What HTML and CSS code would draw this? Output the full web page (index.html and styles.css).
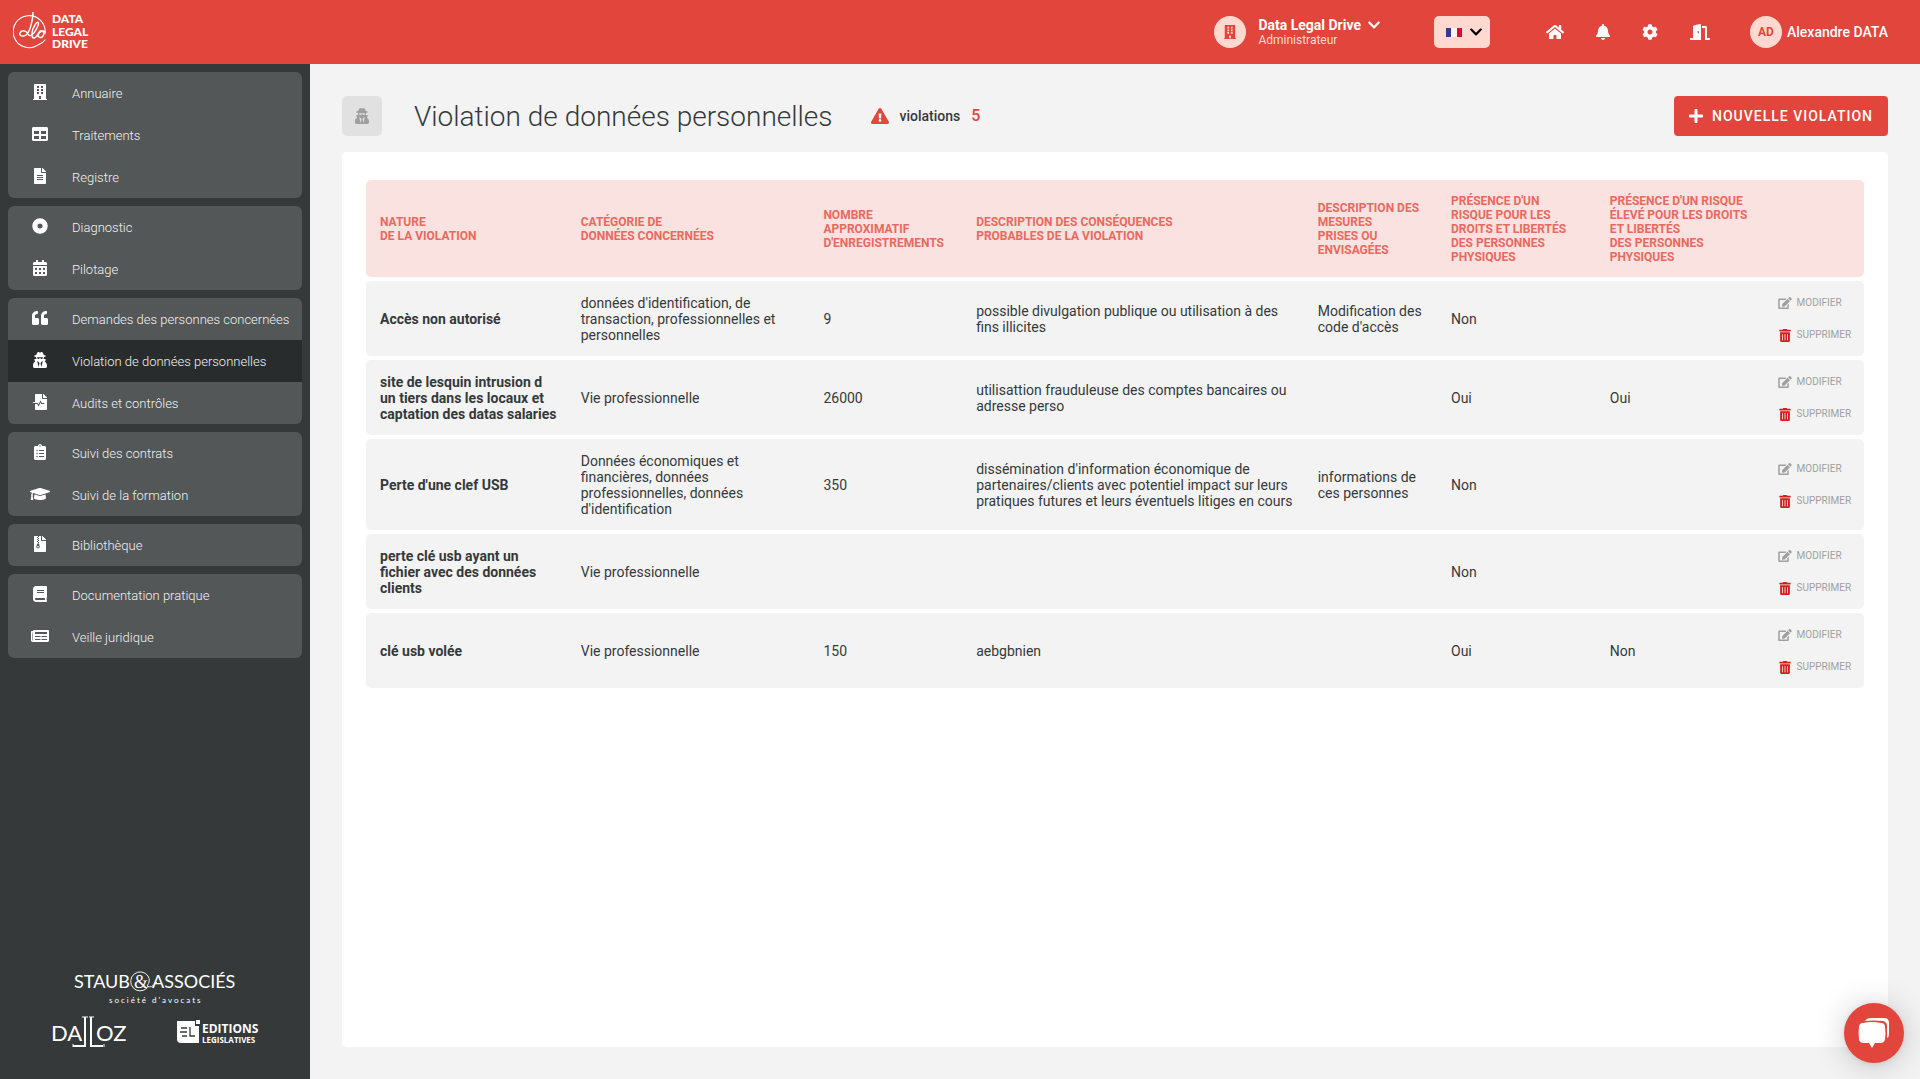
FILE: index.html
```html
<!DOCTYPE html>
<html lang="fr">
<head>
<meta charset="utf-8">
<title>Violation de données personnelles - Data Legal Drive</title>
<link rel="stylesheet" href="styles.css">
</head>
<body>
<svg class="sprite" aria-hidden="true">
  <symbol id="building" viewBox="0 0 448 512"><path fill-rule="evenodd" d="M436 480h-20V24c0-13.3-10.700-24-24-24H56C42.700 0 32 10.700 32 24v456H12c-6.600 0-12 5.400-12 12v20h448v-20c0-6.600-5.400-12-12-12zM128 64h64v64h-64zM256 64h64v64h-64zM128 160h64v64h-64zM256 160h64v64h-64zM128 256h64v64h-64zM256 256h64v64h-64zM192 384h64v96h-64z"/></symbol>
  <symbol id="table" viewBox="0 0 512 512"><path d="M464 32H48C21.490 32 0 53.490 0 80v352c0 26.510 21.490 48 48 48h416c26.510 0 48-21.490 48-48V80c0-26.510-21.490-48-48-48zM224 416H64v-96h160v96zm0-160H64v-96h160v96zm224 160H288v-96h160v96zm0-160H288v-96h160v96z"/></symbol>
  <symbol id="file" viewBox="0 0 384 512"><path d="M224 136V0H24C10.700 0 0 10.700 0 24v464c0 13.300 10.700 24 24 24h336c13.300 0 24-10.700 24-24V160H248c-13.200 0-24-10.800-24-24zm64 236c0 6.600-5.400 12-12 12H108c-6.600 0-12-5.400-12-12v-8c0-6.600 5.400-12 12-12h168c6.600 0 12 5.400 12 12v8zm0-64c0 6.600-5.400 12-12 12H108c-6.600 0-12-5.400-12-12v-8c0-6.600 5.400-12 12-12h168c6.600 0 12 5.400 12 12v8zm0-72v8c0 6.600-5.400 12-12 12H108c-6.600 0-12-5.400-12-12v-8c0-6.600 5.400-12 12-12h168c6.600 0 12 5.400 12 12zm96-114.100v6.100H256V0h6.100c6.400 0 12.500 2.500 17 7l97.900 98c4.500 4.500 7 10.600 7 16.900z"/></symbol>
  <symbol id="disc" viewBox="0 0 512 512"><path fill-rule="evenodd" d="M256 8a248 248 0 1 0 0 496a248 248 0 1 0 0-496zM256 176a80 80 0 1 1 0 160a80 80 0 1 1 0-160z"/></symbol>
  <symbol id="calendar" viewBox="0 0 448 512"><path fill-rule="evenodd" d="M0 464c0 26.500 21.500 48 48 48h352c26.500 0 48-21.500 48-48V192H0zM64 256h64v64H64zM192 256h64v64h-64zM320 256h64v64h-64zM64 384h64v64H64zM192 384h64v64h-64zM320 384h64v64h-64zM400 64h-48V16c0-8.800-7.200-16-16-16h-32c-8.800 0-16 7.200-16 16v48H160V16c0-8.800-7.200-16-16-16h-32c-8.800 0-16 7.200-16 16v48H48C21.500 64 0 85.500 0 112v48h448v-48c0-26.500-21.500-48-48-48z"/></symbol>
  <symbol id="quote" viewBox="0 0 512 512"><path d="M464 256h-80v-64c0-35.300 28.700-64 64-64h8c13.300 0 24-10.700 24-24V56c0-13.300-10.700-24-24-24h-8c-88.400 0-160 71.600-160 160v240c0 26.500 21.500 48 48 48h128c26.500 0 48-21.500 48-48V304c0-26.500-21.500-48-48-48zm-288 0H96v-64c0-35.300 28.700-64 64-64h8c13.300 0 24-10.700 24-24V56c0-13.300-10.700-24-24-24h-8C71.600 32 0 103.600 0 192v240c0 26.500 21.500 48 48 48h128c26.500 0 48-21.500 48-48V304c0-26.500-21.500-48-48-48z"/></symbol>
  <symbol id="spy" viewBox="0 0 448 512"><path d="M383.900 308.300l23.900-62.600c4-10.500-3.700-21.700-15-21.700h-58.500c11-18.900 17.800-40.600 17.800-64v-.3c39.200-7.800 64-19.100 64-31.700 0-13.300-27.300-25.100-70.100-33-9.200-32.800-27-65.800-40.600-82.800-9.500-11.900-25.900-15.600-39.500-8.800l-27.600 13.800c-9 4.500-19.600 4.500-28.600 0L182.100 3.400c-13.600-6.800-30-3.100-39.500 8.800-13.500 17-31.400 50-40.600 82.800-42.700 7.900-70 19.700-70 33 0 12.600 24.800 23.900 64 31.700v.3c0 23.400 6.800 45.100 17.800 64H56.300c-11.500 0-19.200 11.700-14.700 22.300l25.800 60.200C27.300 329.800 0 372.700 0 422.400v44.800C0 491.900 20.100 512 44.800 512h358.400c24.700 0 44.800-20.100 44.800-44.800v-44.800c0-48.400-25.800-90.400-64.100-114.100zM176 480l-41.600-192 49.600 32 24 40-32 120zm96 0l-32-120 24-40 49.600-32L272 480zm41.700-298.500c-3.900 11.900-7 24.600-16.500 33.400-10.100 9.300-48 22.400-64-25-2.800-8.400-15.400-8.400-18.300 0-17 50.200-56 32.400-64 25-9.500-8.800-12.700-21.500-16.500-33.400-.8-2.500-6.300-5.700-6.300-5.800v-10.800c28.300 3.600 61 5.800 96 5.800s67.700-2.100 96-5.800v10.800c-.1.1-5.600 3.200-6.400 5.800z"/></symbol>
  <symbol id="audit" viewBox="0 0 448 512"><path d="M288 136V0H88C74.700 0 64 10.700 64 24v232H8c-4.400 0-8 3.600-8 8v16c0 4.400 3.600 8 8 8h140.900c3 0 5.800 1.700 7.200 4.400l19.900 39.800 56.800-113.700c2.900-5.900 11.400-5.900 14.300 0l34.700 69.500H352c8.800 0 16 7.200 16 16s-7.200 16-16 16h-89.900L240 275.800l-56.800 113.700c-2.900 5.900-11.400 5.900-14.300 0L134.100 320H64v168c0 13.300 10.700 24 24 24h336c13.300 0 24-10.700 24-24V160H312c-13.200 0-24-10.800-24-24zm153-31L343.100 7c-4.500-4.500-10.600-7-17-7H320v128h128v-6.100c0-6.300-2.500-12.400-7-16.900z"/></symbol>
  <symbol id="clipboard" viewBox="0 0 384 512"><path fill-rule="evenodd" d="M336 64h-80c0-35.300-28.700-64-64-64s-64 28.700-64 64H48C21.500 64 0 85.500 0 112v352c0 26.500 21.500 48 48 48h288c26.500 0 48-21.500 48-48V112c0-26.500-21.500-48-48-48zM96 424c-13.300 0-24-10.700-24-24s10.700-24 24-24 24 10.700 24 24-10.700 24-24 24zm0-96c-13.300 0-24-10.700-24-24s10.700-24 24-24 24 10.700 24 24-10.700 24-24 24zm0-96c-13.300 0-24-10.700-24-24s10.700-24 24-24 24 10.700 24 24-10.700 24-24 24zm96-192c13.300 0 24 10.700 24 24s-10.700 24-24 24-24-10.700-24-24 10.700-24 24-24zM160 192h160v32H160zM160 288h160v32H160zM160 384h160v32H160z"/></symbol>
  <symbol id="cap" viewBox="0 0 640 512"><path d="M622.340 153.200L343.400 67.500c-15.200-4.670-31.600-4.670-46.790 0L17.660 153.200c-23.540 7.230-23.540 38.360 0 45.590l48.630 14.940c-10.670 13.190-17.230 29.280-17.880 46.900C38.780 266.150 32 276.110 32 288c0 10.780 5.680 19.850 13.860 25.650L20.330 428.530C18.110 438.520 25.710 448 35.940 448h56.110c10.240 0 17.840-9.480 15.620-19.470L82.140 313.650C90.320 307.850 96 298.780 96 288c0-11.570-6.470-21.250-15.660-26.870.76-15.020 8.440-28.300 20.690-36.720L296.600 284.500c9.060 2.780 26.440 6.250 46.790 0l278.950-85.700c23.550-7.240 23.550-38.360 0-45.600zM352.790 315.090c-28.530 8.760-52.840 3.920-65.590 0l-145.020-44.550L128 384c0 35.350 85.960 64 192 64s192-28.650 192-64l-14.180-113.470-145.030 44.560z"/></symbol>
  <symbol id="archive" viewBox="0 0 384 512"><path fill-rule="evenodd" d="M224 136V0H160v32h-32V0H24C10.700 0 0 10.700 0 24v464c0 13.300 10.700 24 24 24h336c13.300 0 24-10.700 24-24V160H248c-13.200 0-24-10.800-24-24zM96 32h32v32H96zM128 64h32v32h-32zM96 96h32v32H96zM128 128h32v32h-32zM96 160h32v32H96zM128 192h32v32h-32zM106 240h54l22 98c6 36-20 62-54 62s-60-28-54-64zM128 322c-18 0-32 10-32 24s14 24 32 24 32-10 32-24-14-24-32-24zM384 121.900v6.100H256V0h6.100c6.400 0 12.500 2.500 17 7l97.900 98c4.500 4.500 7 10.600 7 16.900z"/></symbol>
  <symbol id="book" viewBox="0 0 448 512"><path d="M448 360V24c0-13.300-10.700-24-24-24H96C43 0 0 43 0 96v320c0 53 43 96 96 96h328c13.300 0 24-10.700 24-24v-16c0-7.500-3.500-14.300-8.900-18.700-4.200-15.400-4.200-59.300 0-74.700 5.400-4.300 8.900-11.100 8.900-18.600zM128 134c0-3.300 2.700-6 6-6h212c3.300 0 6 2.700 6 6v20c0 3.300-2.700 6-6 6H134c-3.300 0-6-2.700-6-6v-20zm0 64c0-3.300 2.700-6 6-6h212c3.300 0 6 2.700 6 6v20c0 3.300-2.700 6-6 6H134c-3.300 0-6-2.700-6-6v-20zm253.400 250H96c-17.700 0-32-14.300-32-32 0-17.600 14.400-32 32-32h285.400c-1.900 17.100-1.900 46.900 0 64z"/></symbol>
  <symbol id="news" viewBox="0 0 576 512"><path fill-rule="evenodd" d="M552 64H88c-13.300 0-24 10.700-24 24v8H24c-13.300 0-24 10.700-24 24v272c0 30.900 25.100 56 56 56h472c26.500 0 48-21.500 48-48V88c0-13.300-10.700-24-24-24zM56 400a8 8 0 0 1-8-8V144h16v248a8 8 0 0 1-8 8zM128 352h176v32H128zM336 352h176v32H336zM128 256h176v32H128zM336 256h176v32H336zM128 128h384v64H128z"/></symbol>
  <symbol id="chevron" viewBox="0 0 448 512"><path d="M207 381.500L12.700 187.100c-9.400-9.400-9.400-24.600 0-33.900l22.700-22.700c9.400-9.400 24.500-9.400 33.900 0L224 284.500l154.700-154c9.400-9.300 24.500-9.300 33.900 0l22.700 22.700c9.400 9.400 9.400 24.600 0 33.900L241 381.500c-9.400 9.400-24.600 9.400-34 0z"/></symbol>
  <symbol id="home" viewBox="0 0 576 512"><path d="M280.370 148.260L96 300.110V464a16 16 0 0 0 16 16l112.060-.29a16 16 0 0 0 15.920-16V368a16 16 0 0 1 16-16h64a16 16 0 0 1 16 16v95.640a16 16 0 0 0 16 16.050L464 480a16 16 0 0 0 16-16V300L295.670 148.260a12.190 12.190 0 0 0-15.300 0zM571.600 251.470L488 182.560V44.050a12 12 0 0 0-12-12h-56a12 12 0 0 0-12 12v72.610L318.470 43a48 48 0 0 0-61 0L4.340 251.470a12 12 0 0 0-1.600 16.900l25.500 31A12 12 0 0 0 45.150 301l235.220-193.740a12.190 12.190 0 0 1 15.300 0L530.900 301a12 12 0 0 0 16.900-1.600l25.500-31a12 12 0 0 0-1.700-16.930z"/></symbol>
  <symbol id="bell" viewBox="0 0 448 512"><path d="M224 512c35.320 0 63.970-28.650 63.970-64H160.030c0 35.350 28.650 64 63.970 64zm215.390-149.710c-19.320-20.760-55.470-51.990-55.470-154.290 0-77.700-54.480-139.900-127.940-155.160V32c0-17.670-14.320-32-31.980-32s-31.980 14.330-31.980 32v20.840C118.560 68.100 64.080 130.300 64.080 208c0 102.300-36.150 133.530-55.470 154.290-6 6.450-8.660 14.160-8.610 21.710.11 16.400 12.980 32 32.100 32h383.800c19.120 0 32-15.600 32.100-32 .05-7.550-2.610-15.270-8.610-21.710z"/></symbol>
  <symbol id="cog" viewBox="0 0 512 512"><path d="M487.400 315.700l-42.600-24.600c4.300-23.200 4.300-47 0-70.200l42.600-24.600c4.900-2.800 7.100-8.600 5.500-14-11.100-35.600-30-67.800-54.700-94.600-3.800-4.100-10-5.100-14.800-2.300L380.800 110c-17.900-15.400-38.500-27.300-60.800-35.100V25.800c0-5.600-3.900-10.500-9.400-11.700-36.700-8.200-74.300-7.800-109.200 0-5.500 1.200-9.400 6.100-9.400 11.700V75c-22.200 7.900-42.800 19.800-60.800 35.100L88.700 85.500c-4.900-2.800-11-1.900-14.800 2.300-24.700 26.700-43.600 58.900-54.700 94.600-1.700 5.400.6 11.200 5.500 14L67.300 221c-4.300 23.200-4.300 47 0 70.200l-42.600 24.600c-4.900 2.800-7.100 8.600-5.500 14 11.100 35.600 30 67.800 54.700 94.600 3.800 4.100 10 5.100 14.800 2.300l42.600-24.600c17.900 15.400 38.500 27.300 60.800 35.100v49.200c0 5.600 3.900 10.500 9.400 11.700 36.700 8.200 74.300 7.800 109.200 0 5.500-1.200 9.400-6.100 9.400-11.700v-49.200c22.200-7.900 42.800-19.800 60.800-35.100l42.600 24.600c4.900 2.800 11 1.900 14.800-2.300 24.700-26.700 43.600-58.900 54.700-94.600 1.500-5.500-.7-11.300-5.600-14.100zM256 336c-44.100 0-80-35.900-80-80s35.900-80 80-80 80 35.900 80 80-35.900 80-80 80z"/></symbol>
  <symbol id="door" viewBox="0 0 640 512"><path d="M624 448h-80V113.450C544 86.190 522.470 64 496 64H384v64h96v384h144c8.840 0 16-7.160 16-16v-32c0-8.840-7.160-16-16-16zM312.240 1.010l-192 49.740C105.990 54.440 96 67.700 96 82.920V448H16c-8.840 0-16 7.160-16 16v32c0 8.840 7.160 16 16 16h336V33.180c0-21.580-19.560-37.410-39.760-32.170zM264 288c-13.250 0-24-14.330-24-32s10.750-32 24-32 24 14.330 24 32-10.750 32-24 32z"/></symbol>
  <symbol id="plus" viewBox="0 0 448 512"><path d="M416 208H272V64c0-17.670-14.330-32-32-32h-32c-17.670 0-32 14.330-32 32v144H32c-17.670 0-32 14.330-32 32v32c0 17.670 14.330 32 32 32h144v144c0 17.670 14.330 32 32 32h32c17.670 0 32-14.330 32-32V304h144c17.670 0 32-14.330 32-32v-32c0-17.670-14.330-32-32-32z"/></symbol>
  <symbol id="warning" viewBox="0 0 576 512"><path d="M569.500 440C588 472 564.800 512 527.900 512H48.100c-37 0-60-40-41.600-72L246.400 24c18.500-32 64.700-32 83.200 0l239.900 416zM288 354c-25.400 0-46 20.600-46 46s20.600 46 46 46 46-20.600 46-46-20.600-46-46-46zm-43.700-165.300l7.400 136c.4 6.300 5.600 11.300 12 11.300h48.500c6.400 0 11.700-5 12-11.300l7.500-136c.3-6.900-5.100-12.700-12-12.700h-63.400c-6.900 0-12.400 5.800-12 12.700z"/></symbol>
  <symbol id="edit" viewBox="0 0 576 512"><path d="M402.600 83.200l90.200 90.200c3.800 3.800 3.800 10 0 13.800L274.400 405.600l-92.800 10.300c-12.400 1.400-22.900-9.100-21.500-21.500l10.300-92.800L388.800 83.200c3.800-3.800 10-3.800 13.800 0zm162-22.900l-48.800-48.800c-15.200-15.200-39.900-15.200-55.200 0l-35.400 35.400c-3.800 3.800-3.800 10 0 13.800l90.200 90.200c3.800 3.800 10 3.800 13.800 0l35.400-35.400c15.200-15.300 15.200-40 0-55.200zM384 346.200V448H64V128h229.800c3.200 0 6.200-1.300 8.500-3.500l40-40c7.600-7.600 2.200-20.500-8.500-20.500H48C21.500 64 0 85.500 0 112v352c0 26.500 21.500 48 48 48h352c26.500 0 48-21.500 48-48V306.200c0-10.700-12.900-16-20.500-8.500l-40 40c-2.200 2.300-3.500 5.300-3.500 8.500z"/></symbol>
  <symbol id="trash" viewBox="0 0 448 512"><path d="M32 464a48 48 0 0 0 48 48h288a48 48 0 0 0 48-48V128H32zm272-256a16 16 0 0 1 32 0v224a16 16 0 0 1-32 0zm-96 0a16 16 0 0 1 32 0v224a16 16 0 0 1-32 0zm-96 0a16 16 0 0 1 32 0v224a16 16 0 0 1-32 0zM432 32H312l-9.400-18.700A24 24 0 0 0 281.100 0H166.800a23.720 23.720 0 0 0-21.400 13.300L136 32H16A16 16 0 0 0 0 48v32a16 16 0 0 0 16 16h416a16 16 0 0 0 16-16V48a16 16 0 0 0-16-16z"/></symbol>
</svg>

<header class="topbar">
  <a class="brand" href="#" aria-label="Data Legal Drive">
    <svg width="80" height="40" viewBox="0 0 80 40" aria-hidden="true">
      <g fill="none" stroke="#fff" stroke-linecap="round">
        <path stroke-width="1.100" d="M32 22A16 16 0 1 0 25 33Q30 31 32 28"/>
        <path stroke-width="1.500" d="M20 0C20 8 17 20 13 23C10 25 6 24 7 21C8 18 13 18 15 22C17 26 21 22 24 16C27 10 25 8 22 13C18 19 18 26 21 26C24 26 25 21 27 19C30 18 32 21 30 24C28 27 25 25 25 23C26 19 31 18 32 20"/>
      </g>
      <g class="brand-words"><text x="39" y="11">DATA</text><text x="39" y="24">LEGAL</text><text x="39" y="36">DRIVE</text></g>
    </svg>
  </a>
  <button class="org" type="button">
    <span class="avatar"><svg class="icon icon-sm"><use href="#building"/></svg></span>
    <span class="org-text">
      <span class="org-name">Data Legal Drive <svg class="icon icon-sm"><use href="#chevron"/></svg></span>
      <span class="org-role">Administrateur</span>
    </span>
  </button>
  <div class="lang">
    <svg width="16" height="9" viewBox="0 0 16 9" aria-hidden="true"><path fill="#303b96" d="M0 0h5v9H0z"/><path fill="#f5f5f5" d="M5 0h6v9H5z"/><path fill="#d80a31" d="M11 0h5v9h-5z"/></svg>
    <svg class="icon icon-sm"><use href="#chevron"/></svg>
    <select aria-label="Langue"><option>Français</option></select>
  </div>
  <nav class="tools" aria-label="Outils">
    <a href="#" aria-label="Accueil"><svg class="icon icon-home"><use href="#home"/></svg></a>
    <a href="#" aria-label="Notifications"><svg class="icon icon-bell"><use href="#bell"/></svg></a>
    <a href="#" aria-label="Paramètres"><svg class="icon"><use href="#cog"/></svg></a>
    <a href="#" aria-label="Déconnexion"><svg class="icon icon-wide"><use href="#door"/></svg></a>
  </nav>
  <a class="user" href="#"><span class="avatar">AD</span>Alexandre DATA</a>
</header>

<div class="layout">
  <aside class="sidebar">
    <nav class="menu" aria-label="Menu principal">
      <div class="menu-group">
        <a href="#"><svg class="icon icon-wide"><use href="#building"/></svg>Annuaire</a>
        <a href="#"><svg class="icon icon-wide"><use href="#table"/></svg>Traitements</a>
        <a href="#"><svg class="icon icon-wide"><use href="#file"/></svg>Registre</a>
      </div>
      <div class="menu-group">
        <a href="#"><svg class="icon icon-wide"><use href="#disc"/></svg>Diagnostic</a>
        <a href="#"><svg class="icon icon-wide"><use href="#calendar"/></svg>Pilotage</a>
      </div>
      <div class="menu-group">
        <a href="#"><svg class="icon icon-wide"><use href="#quote"/></svg>Demandes des personnes concernées</a>
        <a href="#" class="active" aria-current="page"><svg class="icon icon-wide"><use href="#spy"/></svg>Violation de données personnelles</a>
        <a href="#"><svg class="icon icon-wide"><use href="#audit"/></svg>Audits et contrôles</a>
      </div>
      <div class="menu-group">
        <a href="#"><svg class="icon icon-wide"><use href="#clipboard"/></svg>Suivi des contrats</a>
        <a href="#"><svg class="icon icon-wide"><use href="#cap"/></svg>Suivi de la formation</a>
      </div>
      <div class="menu-group">
        <a href="#"><svg class="icon icon-wide"><use href="#archive"/></svg>Bibliothèque</a>
      </div>
      <div class="menu-group">
        <a href="#"><svg class="icon icon-wide"><use href="#book"/></svg>Documentation pratique</a>
        <a href="#"><svg class="icon icon-wide"><use href="#news"/></svg>Veille juridique</a>
      </div>
    </nav>
    <div class="partners">
      <a href="#" aria-label="Staub &amp; Associés">
        <svg width="164" height="36" viewBox="0 0 164 36">
          <g class="staub"><text x="1" y="17">STAUB</text><text x="79" y="17">ASSOCIÉS</text></g>
          <text class="staub-amp" x="61" y="17">&amp;</text>
          <path fill="none" stroke="#f2f2f2" d="M74 17A9.500 9.500 0 1 1 75 5Q78 10 74 15Q78 18 84 11"/>
          <text class="staub-sub" x="36" y="32">société d'avocats</text>
        </svg>
      </a>
      <div class="partners-row">
        <a href="#" aria-label="Dalloz">
          <svg width="76" height="34" viewBox="0 0 76 34">
            <g class="dalloz"><text x="0" y="26">DA</text><text x="45" y="26">OZ</text></g>
            <path fill="none" stroke="#fff" stroke-width="2" d="M34 2V31H22M40 2V31H52"/>
            <path fill="none" stroke="#fff" d="M31 2h6M38 2h5M22 29v3M53 29v3"/>
          </svg>
        </a>
        <a href="#" aria-label="Editions Législatives">
          <svg width="82" height="30" viewBox="0 0 82 30">
            <path fill="#fff" d="M0 4h18v5h4v17H4q-4 0-4-4z"/>
            <path fill="#fff" d="M19 3h4v4h-4z"/>
            <path fill="none" stroke="#35393a" stroke-width="1.300" d="M4 11h6M3 15h7M5 19h5M13 10v9h5"/>
            <text class="edl" x="25" y="16">EDITIONS</text><text class="edl-sub" x="25" y="26">LEGISLATIVES</text>
          </svg>
        </a>
      </div>
    </div>
  </aside>

  <main class="content">
    <div class="page-head">
      <span class="page-icon"><svg class="icon"><use href="#spy"/></svg></span>
      <h1>Violation de données personnelles</h1>
      <p class="counter"><svg class="icon icon-home"><use href="#warning"/></svg>violations <strong>5</strong></p>
      <button class="primary" type="button"><svg class="icon icon-bell"><use href="#plus"/></svg>NOUVELLE VIOLATION</button>
    </div>
    <section class="card">
      <table>
        <colgroup><col class="c-nature"><col class="c-cat"><col class="c-num"><col class="c-cons"><col class="c-mes"><col class="c-risk"><col class="c-high"><col></colgroup>
        <thead>
          <tr>
            <th scope="col">NATURE<br>DE LA VIOLATION</th>
            <th scope="col">CATÉGORIE DE<br>DONNÉES CONCERNÉES</th>
            <th scope="col">NOMBRE<br>APPROXIMATIF<br>D'ENREGISTREMENTS</th>
            <th scope="col">DESCRIPTION DES CONSÉQUENCES<br>PROBABLES DE LA VIOLATION</th>
            <th scope="col">DESCRIPTION DES<br>MESURES<br>PRISES OU<br>ENVISAGÉES</th>
            <th scope="col">PRÉSENCE D'UN<br>RISQUE POUR LES<br>DROITS ET LIBERTÉS<br>DES PERSONNES<br>PHYSIQUES</th>
            <th scope="col">PRÉSENCE D'UN RISQUE<br>ÉLEVÉ POUR LES DROITS<br>ET LIBERTÉS<br>DES PERSONNES<br>PHYSIQUES</th>
            <td></td>
          </tr>
        </thead>
        <tbody>
          <tr>
            <th scope="row">Accès non autorisé</th>
            <td>données d'identification, de transaction, professionnelles et personnelles</td>
            <td>9</td>
            <td>possible divulgation publique ou utilisation à des fins illicites</td>
            <td>Modification des code d'accès</td>
            <td>Non</td>
            <td></td>
            <td><div class="actions"><button type="button"><svg class="icon icon-edit"><use href="#edit"/></svg>MODIFIER</button><button type="button"><svg class="icon icon-trash"><use href="#trash"/></svg>SUPPRIMER</button></div></td>
          </tr>
          <tr>
            <th scope="row">site de lesquin intrusion d un tiers dans les locaux et captation des datas salaries</th>
            <td>Vie professionnelle</td>
            <td>26000</td>
            <td>utilisattion frauduleuse des comptes bancaires ou adresse perso</td>
            <td></td>
            <td>Oui</td>
            <td>Oui</td>
            <td><div class="actions"><button type="button"><svg class="icon icon-edit"><use href="#edit"/></svg>MODIFIER</button><button type="button"><svg class="icon icon-trash"><use href="#trash"/></svg>SUPPRIMER</button></div></td>
          </tr>
          <tr>
            <th scope="row">Perte d'une clef USB</th>
            <td>Données économiques et financières, données professionnelles, données d'identification</td>
            <td>350</td>
            <td>dissémination d'information économique de partenaires/clients avec potentiel impact sur leurs pratiques futures et leurs éventuels litiges en cours</td>
            <td>informations de ces personnes</td>
            <td>Non</td>
            <td></td>
            <td><div class="actions"><button type="button"><svg class="icon icon-edit"><use href="#edit"/></svg>MODIFIER</button><button type="button"><svg class="icon icon-trash"><use href="#trash"/></svg>SUPPRIMER</button></div></td>
          </tr>
          <tr>
            <th scope="row">perte clé usb ayant un fichier avec des données clients</th>
            <td>Vie professionnelle</td>
            <td></td>
            <td></td>
            <td></td>
            <td>Non</td>
            <td></td>
            <td><div class="actions"><button type="button"><svg class="icon icon-edit"><use href="#edit"/></svg>MODIFIER</button><button type="button"><svg class="icon icon-trash"><use href="#trash"/></svg>SUPPRIMER</button></div></td>
          </tr>
          <tr>
            <th scope="row">clé usb volée</th>
            <td>Vie professionnelle</td>
            <td>150</td>
            <td>aebgbnien</td>
            <td></td>
            <td>Oui</td>
            <td>Non</td>
            <td><div class="actions"><button type="button"><svg class="icon icon-edit"><use href="#edit"/></svg>MODIFIER</button><button type="button"><svg class="icon icon-trash"><use href="#trash"/></svg>SUPPRIMER</button></div></td>
          </tr>
        </tbody>
      </table>
    </section>
  </main>
</div>

<button class="chat" type="button" aria-label="Ouvrir la messagerie">
  <svg width="32" height="32" viewBox="0 0 32 32" aria-hidden="true">
    <path fill="#fff" d="M7 4C8 2 10 1 14 1H26Q31 1 31 6V17Q31 20 29 21V9Q29 5 25 4Q16 3 7 4z"/>
    <path fill="#fff" d="M5 6Q14 4 23 6Q27 6 27 10Q28 16 27 22Q27 25 23 26Q20 26 17 26L14 31L11 26Q8 26 5 26Q1 25 1 22Q0 16 1 10Q1 6 5 6z"/>
  </svg>
</button>
</body>
</html>
```
FILE: styles.css
```css
* { box-sizing: border-box; }

body {
  margin: 0;
  min-height: 100vh;
  display: flex;
  flex-direction: column;
  background: #f3f3f3;
  color: #35393a;
  font: 14px/16px Roboto, sans-serif;
}

a { color: inherit; text-decoration: none; }

button {
  border: 0;
  padding: 0;
  background: none;
  color: inherit;
  font: inherit;
  text-align: left;
  cursor: pointer;
}

.sprite { display: none; }

.icon {
  width: 16px;
  height: 16px;
  flex: none;
  display: block;
  fill: currentColor;
}
.icon-sm { width: 14px; height: 14px; }
.icon-bell { width: 14px; }
.icon-home { width: 18px; }
.icon-wide { width: 20px; }
.icon-edit { width: 14px; height: 12px; }
.icon-trash { width: 14px; height: 13px; color: #d3201f; }

/* Top bar */
.topbar {
  height: 64px;
  padding: 0 32px 0 13px;
  display: flex;
  align-items: center;
  background: #e2453c;
  color: #fff;
}
.brand { margin-right: auto; display: flex; }
.brand-words {
  fill: #fff;
  font: 900 12px Lato, sans-serif;
}
.avatar {
  width: 32px;
  height: 32px;
  border-radius: 50%;
  display: flex;
  align-items: center;
  justify-content: center;
  background: #ffd9d0;
  color: #e2453c;
  font-size: 12px;
  font-weight: 700;
}
.org { display: flex; align-items: center; gap: 12px; margin-right: 53px; }
.org-text { display: flex; flex-direction: column; }
.org-name { display: flex; align-items: center; gap: 6px; font-weight: 700; }
.org-role { font-size: 12px; line-height: 14px; color: #ffd9d0; }
.lang {
  width: 56px;
  height: 32px;
  padding: 0 7px 0 12px;
  position: relative;
  display: flex;
  align-items: center;
  justify-content: space-between;
  margin-right: 56px;
  border-radius: 5px;
  background: #ffd9d0;
  color: #000;
}
.lang select {
  position: absolute;
  inset: 0;
  width: 100%;
  opacity: 0;
}
.tools { display: flex; align-items: center; gap: 32px; margin-right: 40px; }
.user { display: flex; align-items: center; gap: 5px; font-weight: 500; }

/* Layout */
.layout { flex: 1; display: flex; }

.sidebar {
  width: 310px;
  flex: none;
  padding: 8px 8px 30px;
  display: flex;
  flex-direction: column;
  justify-content: space-between;
  background: #35393a;
  color: #f2f2f2;
}
.menu { display: flex; flex-direction: column; gap: 8px; }
.menu-group { border-radius: 6px; background: #535758; overflow: hidden; }
.menu-group a {
  height: 42px;
  padding: 2px 0 0 22px;
  display: flex;
  align-items: center;
  gap: 22px;
  font-size: 13px;
  font-weight: 300;
}
.menu-group .icon { margin-bottom: 4px; color: #fff; }
.menu-group .active { background: #282c2d; }

.partners { display: flex; flex-direction: column; align-items: center; gap: 8px; }
.partners a { display: flex; }
.partners-row { display: flex; align-items: center; gap: 50px; }
.partners text { fill: #fff; }
.staub { font: 400 18px Lato, sans-serif; }
.staub-amp { font: 400 18px "Liberation Serif", serif; }
.staub-sub { font: 400 8px Lato, sans-serif; letter-spacing: 2px; }
.dalloz { font: 400 22px Lato, sans-serif; }
.edl { font: 700 12px "Open Sans", sans-serif; }
.edl-sub { font: 700 8px "Open Sans", sans-serif; }

/* Page */
.content {
  flex: 1;
  min-width: 0;
  padding: 32px;
  display: flex;
  flex-direction: column;
  gap: 16px;
}
.page-head { display: flex; align-items: center; }
.page-icon {
  width: 40px;
  height: 40px;
  margin-right: 32px;
  display: flex;
  align-items: center;
  justify-content: center;
  border-radius: 5px;
  background: #e1e1e1;
  color: #9f9f9f;
}
h1 { margin: 0 38px 0 0; padding-top: 2px; font-size: 28px; line-height: 32px; font-weight: 300; }
.counter { margin: 0; display: flex; align-items: center; gap: 11px; font-weight: 500; }
.counter .icon { color: #e2453c; }
.counter strong { color: #e2453c; font-size: 16px; font-weight: 500; }
.primary {
  height: 40px;
  margin-left: auto;
  padding: 0 15px;
  display: flex;
  align-items: center;
  gap: 9px;
  border-radius: 4px;
  background: #e2453c;
  color: #fff;
  font-weight: 500;
  letter-spacing: 1px;
}

.card {
  flex: 1;
  padding: 24px;
  border-radius: 5px;
  background: #fff;
}
table {
  width: 100%;
  table-layout: fixed;
  border-spacing: 0 4px;
}
.c-nature { width: 13.4%; }
.c-cat { width: 16.2%; }
.c-num { width: 10.2%; }
.c-cons { width: 22.8%; }
.c-mes { width: 8.9%; }
.c-risk { width: 10.6%; }
.c-high { width: 11.2%; }
th, td {
  padding: 14px 8px 13px 14px;
  background: #f3f3f3;
  text-align: left;
  vertical-align: middle;
}
th:first-child { border-radius: 5px 0 0 5px; }
td:last-child { border-radius: 0 5px 5px 0; }
td:nth-child(2) { padding-right: 28px; }
thead th, thead td {
  padding-right: 0;
  background: #fae2e0;
  color: #e9695f;
  font-size: 12px;
  line-height: 14px;
  font-weight: 700;
}
.actions { display: flex; flex-direction: column; gap: 16px; }
.actions button {
  display: flex;
  align-items: center;
  gap: 5px;
  color: #9f9f9f;
  font-size: 10px;
  line-height: 16px;
}

.chat {
  position: fixed;
  right: 16px;
  bottom: 16px;
  width: 60px;
  height: 60px;
  display: flex;
  align-items: center;
  justify-content: center;
  border-radius: 50%;
  background: #e2453c;
  box-shadow: 0 1px 6px rgba(0, 0, 0, .1), 0 2px 32px rgba(0, 0, 0, .2);
}
```
